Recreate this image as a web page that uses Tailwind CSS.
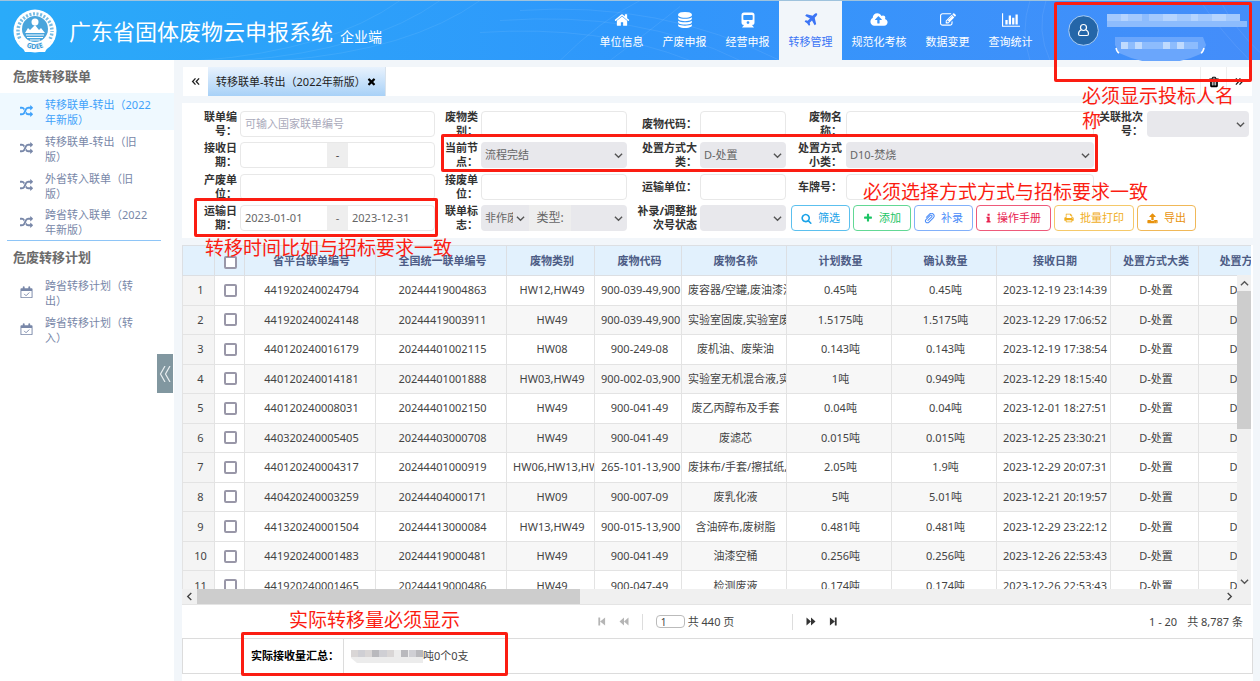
<!DOCTYPE html>
<html lang="zh-CN">

<head>
    <meta charset="UTF-8">
    <title>广东省固体废物云申报系统</title>
    <script src="https://cdn.jsdelivr.net/npm/@tailwindcss/browser@4"></script>
</head>

<body class="relative min-h-screen flex flex-col overflow-hidden bg-[#f2f6fa] font-['Noto_Sans','Noto_Sans_CJK_SC',sans-serif] text-[11px] leading-[14px] text-[#444] [text-spacing-trim:space-all]">

    <!-- Icon sprite -->
    <svg class="hidden">
        <symbol id="i-home" viewBox="0 0 1792 1792"><path d="M1472 992v480q0 26-19 45t-45 19h-384v-384h-256v384h-384q-26 0-45-19t-19-45v-480q0-1 .5-3t.5-3l575-474 575 474q1 2 1 6zm223-69l-62 74q-8 9-21 11h-3q-13 0-21-7l-692-577-692 577q-12 8-24 7-13-2-21-11l-62-74q-8-10-7-23.5t11-21.5l719-599q32-26 76-26t76 26l244 204v-195q0-14 9-23t23-9h192q14 0 23 9t9 23v408l219 182q10 8 11 21.5t-7 23.5z"/></symbol>
        <symbol id="i-database" viewBox="0 0 1792 1792"><path d="M896 768q237 0 443-43t325-127v170q0 69-103 128t-280 93.5-385 34.5-385-34.5-280-93.5-103-128v-170q119 84 325 127t443 43zm0 768q237 0 443-43t325-127v170q0 69-103 128t-280 93.5-385 34.5-385-34.5-280-93.5-103-128v-170q119 84 325 127t443 43zm0-384q237 0 443-43t325-127v170q0 69-103 128t-280 93.5-385 34.5-385-34.5-280-93.5-103-128v-170q119 84 325 127t443 43zm0-1152q208 0 385 34.5t280 93.5 103 128v128q0 69-103 128t-280 93.5-385 34.5-385-34.5-280-93.5-103-128v-128q0-69 103-128t280-93.5 385-34.5z"/></symbol>
        <symbol id="i-train" viewBox="0 0 16 16"><path fill-rule="evenodd" d="M4 .5h8A2.5 2.5 0 0 1 14.500 3v7.500a2.500 2.500 0 0 1-2.500 2.500l2 2.500H2L4 13a2.500 2.500 0 0 1-2.500-2.500V3A2.500 2.500 0 0 1 4 .5zM4 3a.7.7 0 0 0-.7.7v3.600a.7.7 0 0 0 .7.7h8a.7.7 0 0 0 .7-.7V3.700A.7.7 0 0 0 12 3zm4 6.200a1.400 1.400 0 1 0 0 2.800 1.400 1.400 0 0 0 0-2.800z"/></symbol>
        <symbol id="i-plane" viewBox="0 0 1792 1792"><path d="M1568 160q44 52 12 148t-108 172l-161 161 160 696q5 19-12 33l-128 96q-7 6-19 6-4 0-7-1-15-3-21-16l-279-508-259 259 53 194q5 17-8 31l-96 96q-9 9-23 9h-2q-15-2-24-13l-189-252-252-189q-11-7-13-23-1-13 9-25l96-97q9-9 23-9 6 0 8 1l194 53 259-259-508-279q-14-8-17-24-2-16 9-27l128-128q14-13 30-8l665 159 160-160q76-76 172-108t148 12z"/></symbol>
        <symbol id="i-cloud" viewBox="0 0 1920 1792"><path d="M1280 864q0-14-9-23l-352-352q-9-9-23-9t-23 9l-351 351q-10 12-10 24 0 14 9 23t23 9h224v352q0 13 9.500 22.500t22.500 9.500h192q13 0 22.500-9.500t9.500-22.500v-352h224q13 0 22.500-9.500t9.500-22.500zm640 288q0 159-112.500 271.500t-271.500 112.500h-1088q-185 0-316.500-131.500t-131.500-316.500q0-130 70-240t188-165q-2-30-2-43 0-212 150-362t362-150q156 0 285.500 87t188.500 231q71-62 166-62 106 0 181 75t75 181q0 76-41 138 130 31 213.500 135.500t83.500 238.500z"/></symbol>
        <symbol id="i-edit" viewBox="0 0 1792 1792"><path d="M888 1184l116-116-152-152-116 116v56h96v96h56zm440-720q-16-16-33 1l-350 350q-17 17-1 33t33-1l350-350q17-17 1-33zm80 594v190q0 119-84.500 203.500t-203.500 84.500h-832q-119 0-203.500-84.500t-84.500-203.500v-832q0-119 84.500-203.500t203.500-84.500h832q63 0 117 25 15 7 18 23 3 17-9 29l-49 49q-14 14-32 8-23-6-45-6h-832q-66 0-113 47t-47 113v832q0 66 47 113t113 47h832q66 0 113-47t47-113v-126q0-13 9-22l64-64q15-15 35-7t20 29zm-96-738l288 288-672 672h-288v-288zm444 132l-92 92-288-288 92-92q28-28 68-28t68 28l152 152q28 28 28 68t-28 68z"/></symbol>
        <symbol id="i-chart" viewBox="0 0 2048 1792"><path d="M640 896v512h-256v-512h256zm384-512v1024h-256v-1024h256zm1024 1152v128h-2048v-1536h128v1408h1920zm-640-896v768h-256v-768h256zm384-384v1152h-256v-1152h256z"/></symbol>
        <symbol id="i-random" viewBox="0 0 1792 1792"><path d="M666 481q-60 92-137 273-22-45-37-72.500t-40.500-63.500-51-56.500-63-35-81.500-14.500h-224q-14 0-23-9t-9-23v-192q0-14 9-23t23-9h224q250 0 410 225zm1126 799q0 14-9 23l-320 320q-9 9-23 9-13 0-22.500-9.500t-9.500-22.500v-192q-32 0-85 .5t-81 1-73-1-71-5-64-10.500-63-18.500-58-28.500-59-40-55-53.500-56-69.500q59-93 136-273 22 45 37 72.500t40.500 63.500 51 56.500 63 35 81.500 14.500h256v-192q0-14 9-23t23-9q12 0 24 10l319 319q9 9 9 23zm0-896q0 14-9 23l-320 320q-9 9-23 9-13 0-22.500-9.500t-9.500-22.500v-192h-256q-48 0-87 15t-69 45-51 61.500-45 77.500q-32 62-78 171-29 66-49.500 111t-54 105-64 100-74 83-90 68.500-106.500 42-128 16.500h-224q-14 0-23-9t-9-23v-192q0-14 9-23t23-9h224q48 0 87-15t69-45 51-61.500 45-77.500q32-62 78-171 29-66 49.500-111t54-105 64-100 74-83 90-68.500 106.500-42 128-16.500h256v-192q0-14 9-23t23-9q12 0 24 10l319 319q9 9 9 23z"/></symbol>
        <symbol id="i-calendar" viewBox="0 0 14 14"><path fill-rule="evenodd" d="M1.500 2.500H3V1.200a.9.9 0 0 1 2 0v1.300h4V1.200a.9.9 0 0 1 2 0v1.300h1.500a1 1 0 0 1 1 1V12a1 1 0 0 1-1 1h-11a1 1 0 0 1-1-1V3.500a1 1 0 0 1 1-1zM1.500 5.300V12h11V5.300z"/><path fill="none" stroke="currentColor" d="M4.500 8.500l2 2 3.500-3.500"/></symbol>
        <symbol id="i-trash" viewBox="0 0 1792 1792"><path d="M704 1376v-704q0-14-9-23t-23-9h-64q-14 0-23 9t-9 23v704q0 14 9 23t23 9h64q14 0 23-9t9-23zm256 0v-704q0-14-9-23t-23-9h-64q-14 0-23 9t-9 23v704q0 14 9 23t23 9h64q14 0 23-9t9-23zm256 0v-704q0-14-9-23t-23-9h-64q-14 0-23 9t-9 23v704q0 14 9 23t23 9h64q14 0 23-9t9-23zm-544-992h448l-48-117q-7-9-17-11h-317q-10 2-17 11zm928 32v64q0 14-9 23t-23 9h-96v948q0 83-47 143.500t-113 60.500h-832q-66 0-113-58.500t-47-141.500v-952h-96q-14 0-23-9t-9-23v-64q0-14 9-23t23-9h309l70-167q15-37 54-63t79-26h320q40 0 79 26t54 63l70 167h309q14 0 23 9t9 23z"/></symbol>
        <symbol id="i-times" viewBox="0 0 1792 1792"><path d="M1490 1322q0 40-28 68l-136 136q-28 28-68 28t-68-28l-294-294-294 294q-28 28-68 28t-68-28l-136-136q-28-28-28-68t28-68l294-294-294-294q-28-28-28-68t28-68l136-136q28-28 68-28t68 28l294 294 294-294q28-28 68-28t68 28l136 136q28 28 28 68t-28 68l-294 294 294 294q28 28 28 68z"/></symbol>
        <symbol id="i-search" viewBox="0 0 1792 1792"><path d="M1216 832q0-185-131.500-316.500t-316.500-131.500-316.500 131.500-131.500 316.500 131.500 316.500 316.500 131.500 316.500-131.500 131.500-316.500zm512 832q0 52-38 90t-90 38q-54 0-90-38l-343-342q-179 124-399 124-143 0-273.500-55.500t-225-150-150-225-55.500-273.500 55.500-273.500 150-225 225-150 273.500-55.500 273.500 55.500 225 150 150 225 55.500 273.500q0 220-124 399l343 343q37 37 37 90z"/></symbol>
        <symbol id="i-plus" viewBox="0 0 1792 1792"><path d="M1600 736v192q0 40-28 68t-68 28h-416v416q0 40-28 68t-68 28h-192q-40 0-68-28t-28-68v-416h-416q-40 0-68-28t-28-68v-192q0-40 28-68t68-28h416v-416q0-40 28-68t68-28h192q40 0 68 28t28 68v416h416q40 0 68 28t28 68z"/></symbol>
        <symbol id="i-clip" viewBox="0 0 14 14"><path fill="none" stroke="currentColor" stroke-width="1.300" stroke-linecap="round" d="M5 9.500l4.800-4.600a1.300 1.300 0 0 0-1.900-1.900L2.600 8.300a2.400 2.400 0 0 0 3.500 3.500l5.700-5.600a3.300 3.300 0 0 0-4.700-4.700L3 5.500"/></symbol>
        <symbol id="i-info" viewBox="0 0 6 12"><path d="M1.800.8h2.600v2.400H1.800zM.6 4.600h3.800v5h1v1.800H.6V9.600h1V6.400h-1z"/></symbol>
        <symbol id="i-print" viewBox="0 0 1792 1792"><path d="M448 1536h896v-256h-896v256zm0-640h896v-384h-160q-40 0-68-28t-28-68v-160h-640v640zm1152 64q0-26-19-45t-45-19-45 19-19 45 19 45 45 19 45-19 19-45zm128 0v416q0 13-9.500 22.500t-22.500 9.500h-224v160q0 40-28 68t-68 28h-960q-40 0-68-28t-28-68v-160h-224q-13 0-22.500-9.500t-9.500-22.500v-416q0-79 56.500-135.500t135.500-56.500h64v-544q0-40 28-68t68-28h672q40 0 88 20t76 48l152 152q28 28 48 76t20 88v256h64q79 0 135.500 56.500t56.500 135.500z"/></symbol>
        <symbol id="i-upload" viewBox="0 0 1792 1792"><path d="M1344 1472q0-26-19-45t-45-19-45 19-19 45 19 45 45 19 45-19 19-45zm256 0q0-26-19-45t-45-19-45 19-19 45 19 45 45 19 45-19 19-45zm128-224v320q0 40-28 68t-68 28h-1472q-40 0-68-28t-28-68v-320q0-40 28-68t68-28h427q21 56 70.500 92t110.500 36h256q61 0 110.500-36t70.500-92h427q40 0 68 28t28 68zm-325-648q-17 40-59 40h-256v448q0 26-19 45t-45 19h-256q-26 0-45-19t-19-45v-448h-256q-42 0-59-40-17-39 14-69l448-448q18-19 45-19t45 19l448 448q31 30 14 69z"/></symbol>
        <symbol id="i-down" viewBox="0 0 10 10"><path fill="none" stroke="currentColor" stroke-width="1.500" d="M1 3l4 4 4-4"/></symbol>
        <symbol id="i-left2" viewBox="0 0 10 10"><path fill="none" stroke="currentColor" stroke-width="1.500" d="M5 1.500L1.800 5 5 8.500M9 1.500L5.800 5 9 8.500"/></symbol>
        <symbol id="i-right2" viewBox="0 0 10 10"><path fill="none" stroke="currentColor" stroke-width="1.500" d="M1 1.500L4.200 5 1 8.500M5 1.500L8.200 5 5 8.500"/></symbol>
        <symbol id="i-next" viewBox="0 0 10 10"><path d="M0 .5L5 5V.5L10 5 5 9.500V5L0 9.500z"/></symbol>
        <symbol id="i-last" viewBox="0 0 10 10"><path d="M1 .5L6.500 5V.5h2v9h-2V5L1 9.500z"/></symbol>
    </svg>

    <header class="relative h-[60px] flex items-center border-t border-[#9fc3dd] bg-linear-to-r from-[#2aabf9] via-[#2f97fb] to-[#448dfa] text-white">
        <svg class="absolute inset-0 w-full h-full" viewBox="0 0 1260 60" preserveAspectRatio="xMidYMid slice" fill="none" stroke="#fff" stroke-opacity=".08">
            <path d="M200 60Q330 50 400 0M240 60Q370 50 440 0M280 60Q410 50 480 0M520 10Q660 0 780 60M500 20Q640 10 740 60M480 32Q600 24 690 60M560 60Q600 20 640 0M610 60Q650 30 680 6M1030 60Q1020 30 1030 0M1050 60Q1036 30 1046 0M1200 0Q1220 30 1250 60M1220 0Q1236 30 1260 52"/>
        </svg>
        <div class="relative flex flex-1 items-center pl-[13px]">
            <svg class="w-[44px] h-[44px]" viewBox="0 0 44 44">
                <circle cx="22" cy="22" r="21.500" fill="#fff"/>
                <circle cx="22" cy="22" r="17" fill="none" stroke="#4aa5dc" stroke-width="3.500" stroke-dasharray="2 1.600" stroke-dashoffset="1" pathLength="107" opacity=".75"/>
                <circle cx="22" cy="21" r="14.500" fill="#fff"/>
                <path d="M5 30L12 43H32L39 30z" fill="#fff"/>
                <circle cx="22" cy="20" r="13" fill="#4aa5dc"/>
                <circle cx="22" cy="13" r="3.500" fill="#fff"/>
                <path d="M12 24l3-5 2 2 5-5 4 5 2-2 4 5zM13 25.500h18v1H13zM14 28h16v1H14zM17 30.500h10v1H17z" fill="#fff"/>
                <path id="seal" d="M6 33Q22 47 38 33" fill="none"/>
                <text font-size="7" font-weight="700" fill="#3a9bd8" text-anchor="middle"><textPath href="#seal" startOffset="50%">GDEE</textPath></text>
            </svg>
            <h1 class="pl-[12px] text-[22px] leading-[30px]">广东省固体废物云申报系统</h1>
            <span class="pl-[7px] pt-[13px] text-[14px] leading-[20px]">企业端</span>
        </div>
        <nav class="relative flex h-full">
            <a href="#" class="w-[63px] pt-[11px] flex flex-col items-center gap-[7px]"><svg class="w-4 h-4 fill-current"><use href="#i-home"/></svg>单位信息</a>
            <a href="#" class="w-[63px] pt-[11px] flex flex-col items-center gap-[7px]"><svg class="w-4 h-4 fill-current"><use href="#i-database"/></svg>产废申报</a>
            <a href="#" class="w-[63px] pt-[11px] flex flex-col items-center gap-[7px]"><svg class="w-4 h-4 fill-current"><use href="#i-train"/></svg>经营申报</a>
            <a href="#" class="w-[63px] pt-[11px] flex flex-col items-center gap-[7px] bg-[#f2f6fa] text-[#3b74f5]"><svg class="w-4 h-4 fill-current"><use href="#i-plane"/></svg>转移管理</a>
            <a href="#" class="w-[74px] pt-[11px] flex flex-col items-center gap-[7px]"><svg class="w-[18px] h-4 fill-current"><use href="#i-cloud"/></svg>规范化考核</a>
            <a href="#" class="w-[63px] pt-[11px] flex flex-col items-center gap-[7px]"><svg class="w-4 h-4 fill-current"><use href="#i-edit"/></svg>数据变更</a>
            <a href="#" class="w-[63px] pt-[11px] flex flex-col items-center gap-[7px]"><svg class="w-[18px] h-4 fill-current"><use href="#i-chart"/></svg>查询统计</a>
        </nav>
        <div class="relative flex items-center w-[218px] pl-[26px] gap-2">
            <svg class="w-[31px] h-[31px]" viewBox="0 0 31 31" fill="none">
                <circle cx="15.500" cy="15.500" r="14.800" fill="#2466a8" stroke="#a9cdf5"/>
                <circle cx="15.500" cy="12.500" r="3" stroke="#fff" stroke-width="1.200"/>
                <path d="M13 15q-2.500 1-2.500 4 0 1.500 1.500 1.500h7q1.500 0 1.500-1.500 0-3-2.500-4" stroke="#fff" stroke-width="1.200"/>
            </svg>
            <!-- masked account name -->
            <svg class="w-[142px] h-[60px]" viewBox="0 -6 142 60" aria-label="用户">
                <path d="M0 7h133v7h7v6H0z" fill="#8dbcfd"/>
                <path d="M0 7h14v7H0zM21 7h14v7H21zM42 7h14v7H42zM70 7h14v7H70zM91 7h14v7H91zM119 7h14v7h-14z" fill="#a3c9fd"/>
                <path d="M14 7h7v7h-7zM56 7h14v7H56zM84 7h7v7h-7zM105 7h14v7h-14z" fill="#b5d4fe"/>
                <path d="M8 30h88l3 8-3 8Q54 66 12 46l-4-8z" fill="#6aa6fc"/>
                <path d="M14 35h77v7H14z" fill="#8dbcfd"/>
                <path d="M14 35h7v7h-7zM28 35h7v7h-7zM56 35h7v7h-7zM70 35h7v7h-7z" fill="#bfdafe"/>
                <path d="M9 41q1 4 3 5M97 41q-1 4-3 5" fill="none" stroke="#fff" stroke-width="1.500"/>
            </svg>
        </div>
    </header>

    <div class="flex flex-1">
        <aside class="relative w-[174px] shrink-0 bg-white text-[#7887a8] leading-[15px]">
            <h2 class="h-[33px] pl-[13px] flex items-center text-[13px] font-bold text-[#6b6b6b]">危废转移联单</h2>
            <ul>
                <li><a href="#" class="h-[37px] pl-5 flex items-center gap-3 bg-[#eff9ff] text-[#3fa2fa]"><svg class="w-[13px] h-[13px] fill-current"><use href="#i-random"/></svg><span class="w-[107px]">转移联单-转出（2022年新版）</span></a></li>
                <li><a href="#" class="h-[37px] pl-5 flex items-center gap-3"><svg class="w-[13px] h-[13px] fill-current"><use href="#i-random"/></svg><span class="w-[107px]">转移联单-转出（旧版）</span></a></li>
                <li><a href="#" class="h-[37px] pl-5 flex items-center gap-3"><svg class="w-[13px] h-[13px] fill-current"><use href="#i-random"/></svg><span class="w-[107px]">外省转入联单（旧版）</span></a></li>
                <li><a href="#" class="h-[36px] pl-5 flex items-center gap-3"><svg class="w-[13px] h-[13px] fill-current"><use href="#i-random"/></svg><span class="w-[107px]">跨省转入联单（2022年新版）</span></a></li>
            </ul>
            <div class="h-px ml-[7px] mr-[13px] bg-[#8ec5f7]"></div>
            <h2 class="h-[33px] pl-[13px] flex items-center text-[13px] font-bold text-[#6b6b6b]">危废转移计划</h2>
            <ul>
                <li><a href="#" class="h-[37px] pl-5 flex items-center gap-3"><svg class="w-[13px] h-[13px] fill-current"><use href="#i-calendar"/></svg><span class="w-[107px]">跨省转移计划（转出）</span></a></li>
                <li><a href="#" class="h-[37px] pl-5 flex items-center gap-3"><svg class="w-[13px] h-[13px] fill-current"><use href="#i-calendar"/></svg><span class="w-[107px]">跨省转移计划（转入）</span></a></li>
            </ul>
            <button aria-label="收起菜单" class="absolute right-px top-[294px] w-4 h-[39px] bg-[#8197a0] text-[#e8eef0]">
                <svg class="w-4 h-4" viewBox="0 0 16 16" fill="none" stroke="currentColor" stroke-width="1.200"><path d="M8 0L3.500 8 8 16M13 0L8.500 8 13 16"/></svg>
            </button>
        </aside>

        <main class="flex-1 min-w-0 flex flex-col pl-2 pr-[7px] pt-[7px]">
            <!-- Tabs -->
            <div class="flex h-[29px] ml-px mr-px bg-white text-[#222]">
                <button aria-label="向左" class="w-[25px] flex items-center justify-center"><svg class="w-[9px] h-[9px]"><use href="#i-left2"/></svg></button>
                <div class="flex items-center px-2 border-r border-[#d8e2ec] bg-linear-to-b from-[#e8f2fd] to-[#a8d1f7]">
                    <a href="#">转移联单-转出（2022年新版）</a>
                    <button aria-label="关闭"><svg class="w-[11px] h-[11px]"><use href="#i-times"/></svg></button>
                </div>
                <div class="flex-1"></div>
                <button aria-label="清空" class="w-[26px] flex items-center justify-center border-l border-[#eee]"><svg class="w-3 h-3"><use href="#i-trash"/></svg></button>
                <button aria-label="向右" class="w-[26px] flex items-center justify-center border-l border-[#eee]"><svg class="w-[9px] h-[9px]"><use href="#i-right2"/></svg></button>
            </div>

            <!-- Filter form -->
            <form class="mt-[7px] h-[135px] bg-white pl-[22px] pr-1 py-[5px]">
                <div class="h-[126px] grid grid-rows-4 grid-cols-[minmax(0,231fr)_minmax(0,187fr)_minmax(0,154fr)_minmax(0,303fr)_minmax(0,150fr)] gap-x-[5px] items-center">
                    <div class="flex items-center gap-[3px]">
                        <label for="f1" class="w-[33px] shrink-0 text-right font-bold text-[#333]">联单编号：</label>
                        <input id="f1" placeholder="可输入国家联单编号" class="flex-1 min-w-0 h-[26px] px-1 border border-[#e8e8e8] rounded-sm placeholder:text-[#aab]">
                    </div>
                    <div class="flex items-center gap-[3px]">
                        <label for="f2" class="w-[38px] shrink-0 text-right font-bold text-[#333]">废物类别：</label>
                        <input id="f2" class="flex-1 min-w-0 h-[26px] px-1 border border-[#e8e8e8] rounded-sm">
                    </div>
                    <div class="flex items-center gap-[3px]">
                        <label for="f3" class="w-[65px] shrink-0 text-right font-bold text-[#333]">废物代码：</label>
                        <input id="f3" class="flex-1 min-w-0 h-[26px] px-1 border border-[#e8e8e8] rounded-sm">
                    </div>
                    <div class="flex items-center gap-1">
                        <label for="f4" class="w-[51px] shrink-0 text-right font-bold text-[#333]">废物名称：</label>
                        <input id="f4" class="flex-1 min-w-0 h-[26px] px-1 border border-[#e8e8e8] rounded-sm">
                    </div>
                    <div class="flex items-center gap-1">
                        <label for="f5" class="w-[44px] shrink-0 text-right font-bold text-[#333]">关联批次号：</label>
                        <div class="relative flex-1 min-w-0">
                            <select id="f5" class="w-full h-[26px] pl-1 appearance-none bg-[#e8e8ec] rounded-sm"><option></option></select>
                            <svg class="absolute right-1 top-[9px] w-[9px] h-[9px] text-[#555]"><use href="#i-down"/></svg>
                        </div>
                    </div>

                    <div class="flex items-center gap-[3px]">
                        <label for="f6" class="w-[33px] shrink-0 text-right font-bold text-[#333]">接收日期：</label>
                        <div class="flex flex-1 min-w-0 h-[26px] border border-[#e8e8e8] rounded-sm">
                            <input id="f6" class="flex-1 min-w-0 px-1">
                            <span class="w-[21px] bg-[#eee] flex items-center justify-center">-</span>
                            <input aria-label="接收日期止" class="flex-1 min-w-0 px-1">
                        </div>
                    </div>
                    <div class="flex items-center gap-[3px]">
                        <label for="f7" class="w-[38px] shrink-0 text-right font-bold text-[#333]">当前节点：</label>
                        <div class="relative flex-1 min-w-0">
                            <select id="f7" class="w-full h-[26px] pl-1 appearance-none bg-[#e8e8ec] rounded-sm text-[#666]"><option>流程完结</option></select>
                            <svg class="absolute right-1 top-[9px] w-[9px] h-[9px] text-[#555]"><use href="#i-down"/></svg>
                        </div>
                    </div>
                    <div class="flex items-center gap-[3px]">
                        <label for="f8" class="w-[65px] shrink-0 text-right font-bold text-[#333]">处置方式大类：</label>
                        <div class="relative flex-1 min-w-0">
                            <select id="f8" class="w-full h-[26px] pl-1 appearance-none bg-[#e8e8ec] rounded-sm text-[#666]"><option>D-处置</option></select>
                            <svg class="absolute right-1 top-[9px] w-[9px] h-[9px] text-[#555]"><use href="#i-down"/></svg>
                        </div>
                    </div>
                    <div class="flex items-center gap-1">
                        <label for="f9" class="w-[51px] shrink-0 text-right font-bold text-[#333]">处置方式小类：</label>
                        <div class="relative flex-1 min-w-0">
                            <select id="f9" class="w-full h-[26px] pl-1 appearance-none bg-[#e8e8ec] rounded-sm text-[#666]"><option>D10-焚烧</option></select>
                            <svg class="absolute right-1 top-[9px] w-[9px] h-[9px] text-[#555]"><use href="#i-down"/></svg>
                        </div>
                    </div>

                    <div class="col-start-1 flex items-center gap-[3px]">
                        <label for="f10" class="w-[33px] shrink-0 text-right font-bold text-[#333]">产废单位：</label>
                        <input id="f10" class="flex-1 min-w-0 h-[26px] px-1 border border-[#e8e8e8] rounded-sm">
                    </div>
                    <div class="flex items-center gap-[3px]">
                        <label for="f11" class="w-[38px] shrink-0 text-right font-bold text-[#333]">接废单位：</label>
                        <input id="f11" class="flex-1 min-w-0 h-[26px] px-1 border border-[#e8e8e8] rounded-sm">
                    </div>
                    <div class="flex items-center gap-[3px]">
                        <label for="f12" class="w-[65px] shrink-0 text-right font-bold text-[#333]">运输单位：</label>
                        <input id="f12" class="flex-1 min-w-0 h-[26px] px-1 border border-[#e8e8e8] rounded-sm">
                    </div>
                    <div class="flex items-center gap-1">
                        <label for="f13" class="w-[51px] shrink-0 text-right font-bold text-[#333]">车牌号：</label>
                        <input id="f13" class="flex-1 min-w-0 h-[26px] px-1 border border-[#e8e8e8] rounded-sm">
                    </div>

                    <div class="col-start-1 flex items-center gap-[3px]">
                        <label for="f14" class="w-[33px] shrink-0 text-right font-bold text-[#333]">运输日期：</label>
                        <div class="flex flex-1 min-w-0 h-[26px] border border-[#e8e8e8] rounded-sm text-[#666]">
                            <input id="f14" value="2023-01-01" class="flex-1 min-w-0 px-1">
                            <span class="w-[21px] bg-[#eee] flex items-center justify-center">-</span>
                            <input aria-label="运输日期止" value="2023-12-31" class="flex-1 min-w-0 px-1">
                        </div>
                    </div>
                    <div class="flex items-center gap-[3px]">
                        <label for="f15" class="w-[38px] shrink-0 text-right font-bold text-[#333]">联单标志：</label>
                        <div class="flex flex-1 min-w-0 text-[#666]">
                            <div class="relative w-12">
                                <select id="f15" class="w-full h-[26px] pl-1 pr-4 appearance-none bg-[#e8e8ec] rounded-l-sm"><option>非作废</option></select>
                                <svg class="absolute right-1 top-[9px] w-[9px] h-[9px] text-[#555]"><use href="#i-down"/></svg>
                            </div>
                            <label for="f16" class="w-[42px] h-[26px] bg-[#eee] flex items-center justify-center text-[12px]">类型:</label>
                            <div class="relative flex-1 min-w-0">
                                <select id="f16" class="w-full h-[26px] pl-1 appearance-none bg-[#e8e8ec] rounded-r-sm"><option></option></select>
                                <svg class="absolute right-1 top-[9px] w-[9px] h-[9px] text-[#555]"><use href="#i-down"/></svg>
                            </div>
                        </div>
                    </div>
                    <div class="flex items-center gap-[3px]">
                        <label for="f17" class="w-[65px] shrink-0 text-right font-bold text-[#333]">补录/调整批次号状态</label>
                        <div class="relative flex-1 min-w-0">
                            <select id="f17" class="w-full h-[26px] pl-1 appearance-none bg-[#e8e8ec] rounded-sm"><option></option></select>
                            <svg class="absolute right-1 top-[9px] w-[9px] h-[9px] text-[#555]"><use href="#i-down"/></svg>
                        </div>
                    </div>
                    <div class="col-span-2 flex gap-[3px]">
                        <button type="button" class="h-[26px] px-[9px] flex items-center gap-[6px] border rounded-sm whitespace-nowrap border-[#5cc0ee] text-[#1ba3e8]"><svg class="w-[11px] h-[11px] fill-current"><use href="#i-search"/></svg>筛选</button>
                        <button type="button" class="h-[26px] px-[9px] flex items-center gap-[6px] border rounded-sm whitespace-nowrap border-[#62d895] text-[#1cc465]"><svg class="w-[10px] h-[10px] fill-current"><use href="#i-plus"/></svg>添加</button>
                        <button type="button" class="h-[26px] px-[9px] flex items-center gap-[6px] border rounded-sm whitespace-nowrap border-[#82b0fa] text-[#4a8cf8]"><svg class="w-[11px] h-[11px]"><use href="#i-clip"/></svg>补录</button>
                        <button type="button" class="h-[26px] px-[9px] flex items-center gap-[6px] border rounded-sm whitespace-nowrap border-[#ee5a7a] text-[#e8224e]"><svg class="w-[5px] h-[10px] fill-current"><use href="#i-info"/></svg>操作手册</button>
                        <button type="button" class="h-[26px] px-[9px] flex items-center gap-[6px] border rounded-sm whitespace-nowrap border-[#f5c96a] text-[#f0ad1c]"><svg class="w-[10px] h-[10px] fill-current"><use href="#i-print"/></svg>批量打印</button>
                        <button type="button" class="h-[26px] px-[9px] flex items-center gap-[6px] border rounded-sm whitespace-nowrap border-[#f0b858] text-[#e8920c]"><svg class="w-[11px] h-[11px] fill-current"><use href="#i-upload"/></svg>导出</button>
                    </div>
                </div>
            </form>

            <!-- Data grid -->
            <section class="mt-[7px] flex-1 bg-white">
                <div class="relative h-[344px] mr-[2px] overflow-hidden">
                    <table class="table-fixed w-[1121px] h-[356px] border-collapse text-center">
                        <colgroup>
                            <col class="w-[32px]"><col class="w-[30px]"><col class="w-[131px]"><col class="w-[131px]"><col class="w-[88px]"><col class="w-[87px]"><col class="w-[105px]"><col class="w-[105px]"><col class="w-[105px]"><col class="w-[114px]"><col class="w-[88px]"><col class="w-[105px]">
                        </colgroup>
                        <thead>
                            <tr class="h-[30px] bg-[#e2f1fd] text-[#4d5c85]">
                                <th class="border border-[#dcdfe3]"></th>
                                <th class="border border-[#dcdfe3] pl-px"><input type="checkbox" aria-label="全选" class="block mx-auto mt-1 appearance-none w-[13px] h-[13px] border-2 border-[#9997a8] rounded-xs bg-white"></th>
                                <th class="border border-[#dcdfe3] pl-[3px]">省平台联单编号</th>
                                <th class="border border-[#dcdfe3] pl-[3px]">全国统一联单编号</th>
                                <th class="border border-[#dcdfe3] pl-[3px]">废物类别</th>
                                <th class="border border-[#dcdfe3] pl-[3px]">废物代码</th>
                                <th class="border border-[#dcdfe3] pl-[3px]">废物名称</th>
                                <th class="border border-[#dcdfe3] pl-[3px]">计划数量</th>
                                <th class="border border-[#dcdfe3] pl-[3px]">确认数量</th>
                                <th class="border border-[#dcdfe3] pl-[3px]">接收日期</th>
                                <th class="border border-[#dcdfe3] pl-[3px]">处置方式大类</th>
                                <th class="border border-[#dcdfe3] pl-[3px]">处置方式小类</th>
                            </tr>
                        </thead>
                        <tbody id="rows"></tbody>
                    </table>
                    <div class="absolute right-0 top-[30px] bottom-0 w-[14px] bg-[#f0f0f0] text-[#555] flex flex-col items-center justify-between pb-[3px]">
                        <svg class="mt-1 w-[9px] h-[9px] rotate-180"><use href="#i-down"/></svg>
                        <div class="absolute top-4 w-full h-[138px] bg-[#cdcdcd]"></div>
                        <svg class="w-[9px] h-[9px]"><use href="#i-down"/></svg>
                    </div>
                </div>
                <div class="flex items-center h-[16px] mr-[2px] bg-[#f0f0f0] text-[#444] border-b border-[#e4e4e4]">
                    <svg class="mx-[3px] w-[9px] h-[9px] rotate-90"><use href="#i-down"/></svg>
                    <div class="w-[383px] h-full bg-[#cdcdcd]"></div>
                    <svg class="ml-auto mr-[17px] w-[9px] h-[9px] -rotate-90"><use href="#i-down"/></svg>
                </div>

                <!-- Pager -->
                <div class="grid grid-cols-[1fr_auto_1fr] items-center h-[33px]">
                    <div></div>
                    <div class="flex items-center">
                        <button aria-label="首页" class="text-[#b5b5b5]"><svg class="w-[9px] h-[9px] rotate-180 fill-current"><use href="#i-last"/></svg></button>
                        <button aria-label="上一页" class="ml-[13px] text-[#b5b5b5]"><svg class="w-[10px] h-[9px] rotate-180 fill-current"><use href="#i-next"/></svg></button>
                        <span class="ml-[13px] w-px h-4 bg-[#ddd]"></span>
                        <input aria-label="页码" value="1" class="ml-[13px] w-[29px] h-[13px] px-1 border border-[#bbb] rounded-sm text-[10px] leading-[11px]">
                        <span class="ml-[3px]">共 440 页</span>
                        <span class="ml-[58px] w-px h-4 bg-[#ddd]"></span>
                        <button aria-label="下一页" class="ml-[13px] text-[#333]"><svg class="w-[10px] h-[9px] fill-current"><use href="#i-next"/></svg></button>
                        <button aria-label="末页" class="ml-[13px] text-[#333]"><svg class="w-[9px] h-[9px] fill-current"><use href="#i-last"/></svg></button>
                    </div>
                    <div class="flex justify-end gap-[10px] pr-[10px]"><span>1 - 20</span><span>共 8,787 条</span></div>
                </div>

                <!-- Totals -->
                <table class="w-full h-[36px] border-collapse">
                    <tr>
                        <th class="w-[161px] pr-[4px] border border-[#dcdcdc] text-right text-black">实际接收量汇总：</th>
                        <td class="pl-[7px] border border-[#dcdcdc]">
                            <div class="flex items-center">
                                <svg class="w-[72px] h-[16px]" viewBox="0 0 72 16">
                                    <path d="M0 2h72v13H6L0 10z" fill="#ececec"/>
                                    <path d="M0 2h7v7H0zM14 2h7v7h-7zM36 2h7v7h-7z" fill="#d9d6d6"/>
                                    <path d="M7 2h7v7H7zM28 2h8v7h-8zM58 2h7v7h-7z" fill="#cfcfd4"/>
                                    <path d="M21 2h7v7h-7zM50 2h7v7h-7zM65 2h7v7h-7z" fill="#b9b9bd"/>
                                </svg>吨0个0支
                            </div>
                        </td>
                    </tr>
                </table>
            </section>
        </main>
    </div>

    <!-- Review notes drawn over the page -->
    <div class="absolute inset-0 pointer-events-none text-[#fb1d12] text-[19px] leading-[25px]">
        <div class="absolute left-[1054px] top-[2px] w-[198px] h-[80px] border-3 border-[#fb1d12] rounded-xs"></div>
        <div class="absolute left-[441px] top-[134px] w-[657px] h-[38px] border-3 border-[#fb1d12] rounded-xs"></div>
        <div class="absolute left-[194px] top-[198px] w-[244px] h-[39px] border-3 border-[#fb1d12] rounded-xs"></div>
        <div class="absolute left-[241px] top-[632px] w-[267px] h-[44px] border-3 border-[#fb1d12] rounded-xs"></div>
        <p class="absolute left-[1082px] top-[84px] w-[153px]">必须显示投标人名称</p>
        <p class="absolute left-[863px] top-[180px] whitespace-nowrap">必须选择方式方式与招标要求一致</p>
        <p class="absolute left-[205px] top-[236px] whitespace-nowrap">转移时间比如与招标要求一致</p>
        <p class="absolute left-[289px] top-[608px] whitespace-nowrap">实际转移量必须显示</p>
    </div>

    <script>
        const rows = [
            ['441920240024794', '20244419004863', 'HW12,HW49', '900-039-49,900', '废容器/空罐,废油漆渣', '0.45吨', '0.45吨', '2023-12-19 23:14:39'],
            ['441920240024148', '20244419003911', 'HW49', '900-039-49,900', '实验室固废,实验室废液', '1.5175吨', '1.5175吨', '2023-12-29 17:06:52'],
            ['440120240016179', '20244401002115', 'HW08', '900-249-08', '废机油、废柴油', '0.143吨', '0.143吨', '2023-12-19 17:38:54'],
            ['440120240014181', '20244401001888', 'HW03,HW49', '900-002-03,900', '实验室无机混合液,实验室', '1吨', '0.949吨', '2023-12-29 18:15:40'],
            ['440120240008031', '20244401002150', 'HW49', '900-041-49', '废乙丙醇布及手套', '0.04吨', '0.04吨', '2023-12-01 18:27:51'],
            ['440320240005405', '20244403000708', 'HW49', '900-041-49', '废滤芯', '0.015吨', '0.015吨', '2023-12-25 23:30:21'],
            ['440120240004317', '20244401000919', 'HW06,HW13,HW49', '265-101-13,900', '废抹布/手套/擦拭纸,有机', '2.05吨', '1.9吨', '2023-12-29 20:07:31'],
            ['440420240003259', '20244404000171', 'HW09', '900-007-09', '废乳化液', '5吨', '5.01吨', '2023-12-21 20:19:57'],
            ['441320240001504', '20244413000084', 'HW13,HW49', '900-015-13,900', '含油碎布,废树脂', '0.481吨', '0.481吨', '2023-12-29 23:22:12'],
            ['441920240001483', '20244419000481', 'HW49', '900-041-49', '油漆空桶', '0.256吨', '0.256吨', '2023-12-26 22:53:43'],
            ['441920240001465', '20244419000486', 'HW49', '900-047-49', '检测废液', '0.174吨', '0.174吨', '2023-12-26 22:53:43'],
        ];

        // from this many characters on, a value starts at the cell's left edge and is cut off at its right
        const maxLength = { 2: 13, 3: 14, 4: 10 };

        document.getElementById('rows').innerHTML = rows.map((row, i) => {
            const cells = row.concat('D-处置', 'D10-焚烧').map((text, c) => {
                const long = text.length >= maxLength[c];
                return `<td class="border border-[#e3e3e3] whitespace-nowrap overflow-hidden ${long ? 'text-left pl-[6px]' : 'pl-[3px]'}">${text}</td>`;
            }).join('');
            return `<tr class="${i % 2 ? 'bg-[#f7f7f7]' : 'bg-white'}">
                <td class="border border-[#e3e3e3] bg-[#f4f4f4] pl-1">${i + 1}</td>
                <td class="border border-[#e3e3e3] bg-white pl-px"><input type="checkbox" aria-label="选择第${i + 1}行" class="block mx-auto appearance-none w-[13px] h-[13px] border-2 border-[#9997a8] rounded-xs bg-white"></td>
                ${cells}</tr>`;
        }).join('');
    </script>
</body>

</html>
